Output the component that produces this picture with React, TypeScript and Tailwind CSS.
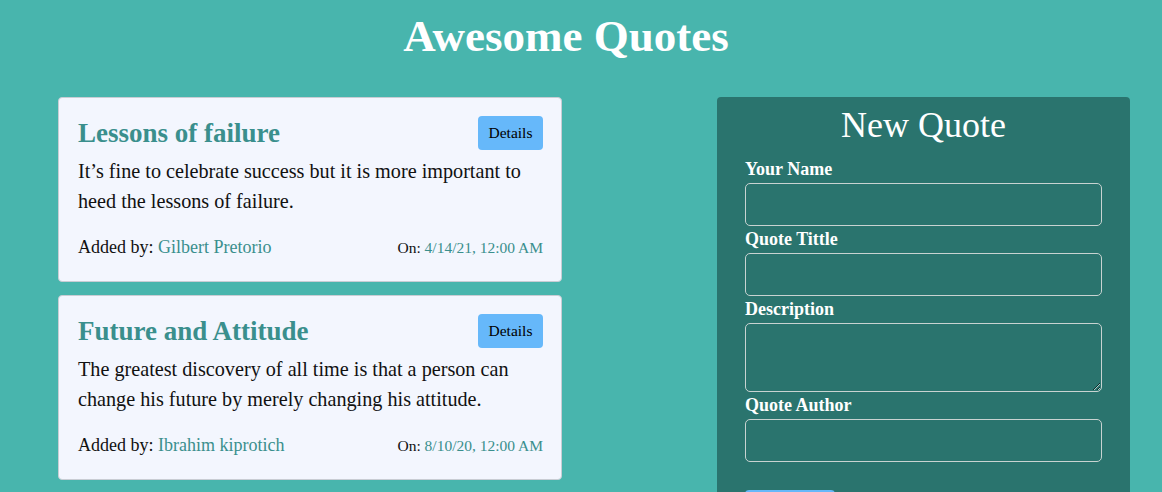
import { useState } from "react";

interface Quote {
    title: string;
    text: string;
    addedBy: string;
    date: string;
}

const quotes: Quote[] = [
    {
        title: "Lessons of failure",
        text: "It’s fine to celebrate success but it is more important to heed the lessons of failure.",
        addedBy: "Gilbert Pretorio",
        date: "4/14/21, 12:00 AM",
    },
    {
        title: "Future and Attitude",
        text: "The greatest discovery of all time is that a person can change his future by merely changing his attitude.",
        addedBy: "Ibrahim kiprotich",
        date: "8/10/20, 12:00 AM",
    },
];

function QuoteCard({ title, text, addedBy, date }: Quote) {
    return (
        <div className="rounded-[4px] border border-[#c9cdd4] bg-[#f3f6fe] pl-[19px] pr-[18px] pt-[18px] pb-[20px]">
            <div className="flex items-center justify-between">
                <h2 className="text-[27px] font-bold leading-[34px] text-[#3a8f8d]">{title}</h2>
                <button className="h-[34px] w-[65px] rounded-[4px] bg-[#66b8fa] text-[15.5px] text-black">Details</button>
            </div>
            <p className="mt-[6px] text-[20.2px] leading-[30px] text-[#111]">{text}</p>
            <div className="mt-[18px] flex items-baseline justify-between">
                <p className="text-[18px] text-[#111]">
                    Added by: <span className="text-[#3a8f8d]">{addedBy}</span>
                </p>
                <p className="text-[15.5px] text-[#111]">
                    On: <span className="text-[#3a8f8d]">{date}</span>
                </p>
            </div>
        </div>
    );
}

function Field({ label, area }: { label: string; area?: boolean }) {
    const [value, setValue] = useState("");
    return (
        <div className="flex flex-col">
            <label className="text-[18px] font-bold leading-[20px] text-white">{label}</label>
            {area ? (
                <textarea
                    value={value}
                    onChange={(e) => setValue(e.target.value)}
                    className="mt-[4px] h-[69px] w-full rounded-[5px] border border-[#c8d3d1] bg-transparent px-2 text-white outline-none"
                />
            ) : (
                <input
                    value={value}
                    onChange={(e) => setValue(e.target.value)}
                    className="mt-[4px] h-[43px] w-full rounded-[5px] border border-[#c8d3d1] bg-transparent px-2 text-white outline-none"
                />
            )}
        </div>
    );
}

export default function App() {
    return (
        <div className="h-[492px] overflow-hidden bg-[#48b5ad] font-['Liberation_Serif',serif]">
            <h1 className="w-[1132px] pt-[10px] text-center text-[45px] font-bold leading-[53px] text-white">Awesome Quotes</h1>
            <div className="mt-[34px] flex justify-between pl-[58px] pr-[32px]">
                <div className="flex w-[504px] flex-col gap-[13px]">
                    {quotes.map((q) => (
                        <QuoteCard key={q.title} {...q} />
                    ))}
                </div>
                <form className="w-[413px] rounded-[4px] bg-[#2a746e] px-[28px] pt-[7px] pb-8">
                    <h2 className="text-center text-[36px] leading-[43px] text-white">New Quote</h2>
                    <div className="mt-[12px] flex flex-col gap-[3px]">
                        <Field label="Your Name" />
                        <Field label="Quote Tittle" />
                        <Field label="Description" area />
                        <Field label="Quote Author" />
                    </div>
                    <button type="button" className="mt-[28px] h-[34px] w-[90px] rounded-[4px] bg-[#66b8fa] text-[15px] text-black">
                        Submit
                    </button>
                </form>
            </div>
        </div>
    );
}
